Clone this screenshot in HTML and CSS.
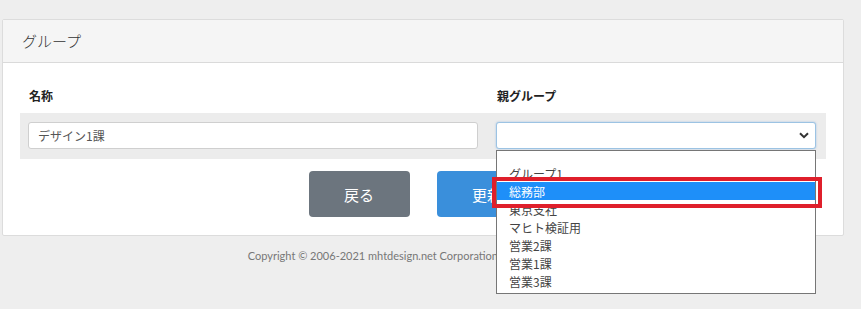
FILE: index.html
```html
<!doctype html>
<html>
    <head>
        <title>グループ</title>
        <meta charset="utf-8">
        <link rel="stylesheet" href="styles.css">
    </head>
    <body>
        <div class="page">
            <div class="card">
                <div class="card-header">グループ</div>
                <div class="card-body">
                    <div class="form-grid labels">
                        <label>名称</label>
                        <label>親グループ</label>
                    </div>
                    <div class="form-grid band">
                        <input type="text" class="text-input" value="デザイン1課">
                        <div class="select-wrap">
                            <div class="select-box">
                                <svg class="chevron" width="10" height="7" viewBox="0 0 10 7">
                                    <path d="M1 1.2 L5 5.2 L9 1.2" fill="none" stroke="#333" stroke-width="2"/>
                                </svg>
                            </div>
                            <!-- open option list, drawn over the page -->
                            <ul class="options">
                                <li class="empty"></li>
                                <li>グループ1</li>
                                <li class="selected">総務部</li>
                                <li>東京支社</li>
                                <li>マヒト検証用</li>
                                <li>営業2課</li>
                                <li>営業1課</li>
                                <li>営業3課</li>
                                <span class="mark"></span>
                            </ul>
                        </div>
                    </div>
                    <div class="actions">
                        <button class="btn btn-back">戻る</button>
                        <button class="btn btn-save">更新</button>
                    </div>
                </div>
            </div>
            <p class="copyright">Copyright © 2006-2021 mhtdesign.net Corporation. All Rights Reserved.</p>
        </div>
    </body>
</html>
```

FILE: styles.css
```css
body {
    margin: 0;
    background: #eeeeee;
    color: #333;
    font: 12px/18px 'Noto Sans CJK JP', sans-serif;
}

.page {
    min-height: 309px;
    box-sizing: border-box;
    padding: 19px 17px 0 2px;
}

.card {
    background: white;
    border: 1px solid #dcdcdc;
    border-radius: 2px;
}

.card-header {
    background: #f5f5f5;
    border-bottom: 1px solid #dadada;
    height: 42px;
    line-height: 42px;
    padding-left: 19px;
    font-size: 15px;
    font-weight: 300;
    color: #333;
}

.card-body {
    padding: 24px 17px 18px 17px;
}

.form-grid {
    display: grid;
    grid-template-columns: 450px 320px;
    column-gap: 18px;
}

.labels {
    padding-left: 9px;
    margin-bottom: 8px;
}

.labels label {
    font-weight: bold;
    color: #222;
}

.band {
    background: #ececec;
    padding: 9px 9px 10px 8px;
}

.text-input {
    box-sizing: border-box;
    height: 27px;
    margin: 0;
    border: 1px solid #cfcfcf;
    border-radius: 3px;
    padding: 0 9px;
    font: 12px 'Noto Sans CJK JP', sans-serif;
    color: #555;
}

.select-wrap {
    position: relative;
}

.select-box {
    box-sizing: border-box;
    height: 27px;
    border: 1px solid #9cc3e3;
    border-radius: 3px;
    box-shadow: 0 0 2px rgba(102, 160, 220, .6);
    background: white;
    display: flex;
    align-items: center;
    justify-content: flex-end;
    padding-right: 6px;
}

.options {
    position: absolute;
    top: 28px;
    left: 0;
    right: 0;
    margin: 0;
    padding: 0 0 3px 0;
    list-style: none;
    background: white;
    border: 1px solid #767676;
    z-index: 2;
}

.options li {
    height: 18px;
    line-height: 19px;
    padding-left: 12px;
    color: #444;
}

.options li.empty {
    height: 13px;
}

.options li.selected {
    background: #1e8ff9;
    color: white;
}

.mark {
    position: absolute;
    top: 26px;
    left: -5px;
    width: 322px;
    height: 23px;
    border: 4px solid #df1f2b;
}

.actions {
    display: flex;
    justify-content: center;
    gap: 27px;
    margin-top: 12px;
}

.btn {
    width: 101px;
    height: 46px;
    border: none;
    border-radius: 4px;
    color: white;
    font: 15px 'Noto Sans CJK JP', sans-serif;
}

.btn-back {
    background: #6c757e;
}

.btn-save {
    background: #3a8fdb;
}

.copyright {
    margin: 11px 0 0 0;
    text-align: center;
    font: 11px/18px 'Lato', sans-serif;
    color: #777;
}
```
